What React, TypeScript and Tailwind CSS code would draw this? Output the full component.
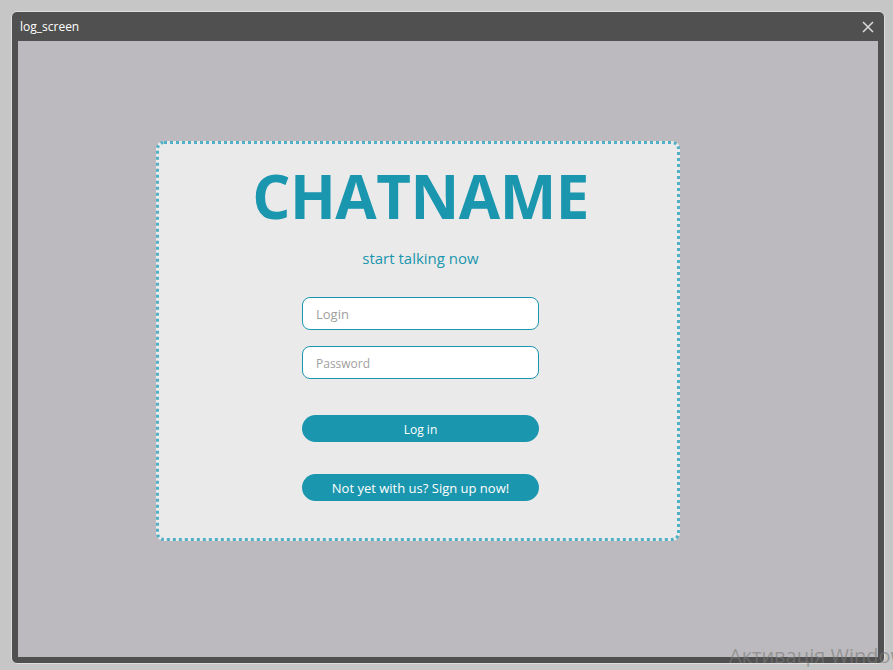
import React from 'react';

const LogScreen = () => {
  return (
    <div className="relative h-[670px] w-[893px] overflow-hidden bg-[#c6c6c6] pl-[11px] pt-[11px] font-['Open_Sans',sans-serif]">
      <div className="flex h-[653px] w-[874px] flex-col rounded-[6px] border border-[#dedede] bg-[#505050] px-[6px] pb-[6px]">
        <div className="flex h-[29px] shrink-0 items-center justify-between pl-[2px] pr-[4px]">
          <span className="text-[12px] text-white">log_screen</span>
          <svg width="12" height="12" viewBox="0 0 12 12" className="text-[#d8d8d8]">
            <path d="M1 1 L11 11 M11 1 L1 11" stroke="currentColor" strokeWidth="1.6" />
          </svg>
        </div>
        <div className="flex-1 bg-[#bcbabe] pl-[138px] pt-[100px]">
          <div className="flex h-[400px] w-[524px] flex-col items-center rounded-[8px] border-[3px] border-dotted border-[#4fb0c6] bg-[#eaeaea] pl-[5px]">
            <h1 className="mt-[12px] text-[60px] font-bold leading-[80px] tracking-[-0.5px] text-[#1a96ae]">CHATNAME</h1>
            <p className="mt-[11px] text-[15px] text-[#1a96ae]">start talking now</p>
            <div className="mt-[27px] flex w-[237px] flex-col gap-[16px]">
              <input
                placeholder="Login"
                className="h-[33px] rounded-[8px] border border-[#1a96ae] bg-white px-[13px] pt-[2px] text-[13px] placeholder:text-[#a0a0a0] outline-none"
              />
              <input
                placeholder="Password"
                className="h-[33px] rounded-[8px] border border-[#1a96ae] bg-white px-[13px] pt-[2px] text-[12px] placeholder:text-[#a0a0a0] outline-none"
              />
              <button className="mt-[20px] h-[27px] rounded-full bg-[#1a96ae] pt-[3px] text-[12px] text-white">Log in</button>
              <button className="mt-[16px] h-[27px] rounded-full bg-[#1a96ae] pt-[3px] text-[13px] text-white">
                Not yet with us? Sign up now!
              </button>
            </div>
          </div>
        </div>
      </div>
      <span className="absolute left-[729px] top-[641px] whitespace-nowrap text-[20px] text-[#7a7a7a]/60">Активація Windows</span>
    </div>
  );
};

export default LogScreen;
